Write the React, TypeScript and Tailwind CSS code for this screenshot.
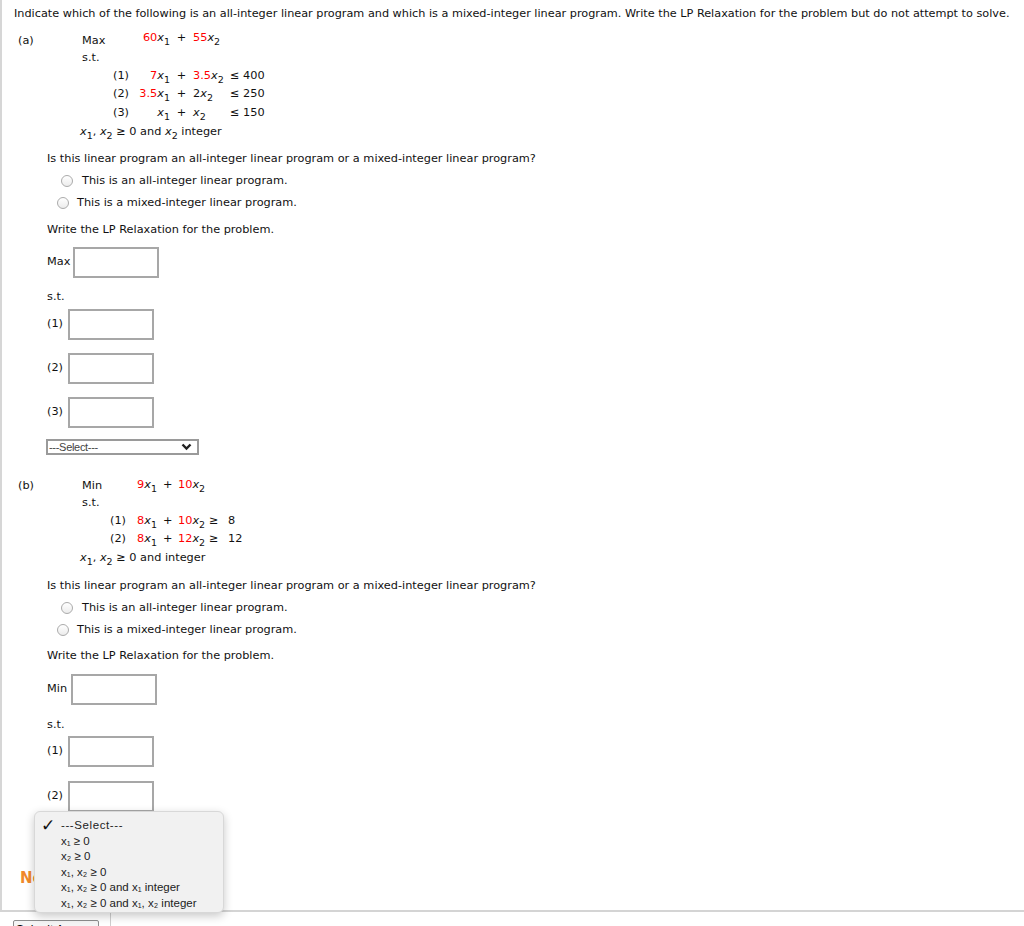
import type { ReactNode } from 'react';

// x with a subscript, as the textbook renders it
function V({ n }: { n: string }) {
  return (
    <span className="whitespace-nowrap">
      <i>x</i>
      <span className="relative top-[4px] text-[9.5px] leading-none">{n}</span>
    </span>
  );
}

function Red({ children }: { children: ReactNode }) {
  return <span className="text-[#ff0000]">{children}</span>;
}

function Box() {
  return <div className="h-[31px] w-[86px] border-2 border-[#a7a7a7] bg-white" />;
}

function Radio({ label, shift }: { label: string; shift?: boolean }) {
  return (
    <div className={`flex h-[22px] items-center ${shift ? 'pl-[55px]' : 'pl-[59px]'}`}>
      <span className="h-[12px] w-[12px] rounded-full border border-[#ababab] bg-linear-to-b from-white to-[#ececec]" />
      <span className={shift ? 'ml-[8px]' : 'ml-[9px]'}>{label}</span>
    </div>
  );
}

function Field({ label, gap, mt }: { label: string; gap: string; mt: string }) {
  return (
    <div className={`flex items-center pl-[45px] ${mt}`}>
      <span className={gap}>{label}</span>
      <Box />
    </div>
  );
}

const options = [
  'x₁ ≥ 0',
  'x₂ ≥ 0',
  'x₁, x₂ ≥ 0',
  'x₁, x₂ ≥ 0 and x₁ integer',
  'x₁, x₂ ≥ 0 and x₁, x₂ integer',
];

export default function App() {
  return (
    <div className="relative h-[926px] w-full overflow-hidden bg-white font-['DejaVu_Sans','Verdana',sans-serif] text-[11.3px] text-[#111]">
      <div className="h-[910px] border-l-2 border-[#d6d6d6]">
        {/* Question */}
        <p className="pl-[12px] pt-[6px] text-[11.25px] leading-[15px] whitespace-nowrap">
          Indicate which of the following is an all-integer linear program and which is a
          mixed-integer linear program. Write the LP Relaxation for the problem but do not
          attempt to solve.
        </p>

        {/* (a) */}
        <div className="mt-[11px] flex pl-[16px]">
          <div className="flex h-[18px] w-[64px] items-center">(a)</div>
          <div>
            <div className="flex h-[18px] items-center">
              <span className="w-[31px]">Max</span>
              <span className="flex w-[57px] -translate-y-[3px] justify-end">
                <Red>60</Red>
                <V n="1" />
              </span>
              <span className="w-[23px] -translate-y-[3px] text-center">+</span>
              <span className="-translate-y-[3px]">
                <Red>55</Red>
                <V n="2" />
              </span>
            </div>
            <div className="flex h-[17px] items-center">s.t.</div>
            <div className="flex h-[18px] items-center">
              <span className="w-[31px]" />
              <span className="w-[27px]">(1)</span>
              <span className="flex w-[30px] justify-end">
                <Red>7</Red>
                <V n="1" />
              </span>
              <span className="w-[23px] text-center">+</span>
              <span className="w-[37px]">
                <Red>3.5</Red>
                <V n="2" />
              </span>
              <span>≤ 400</span>
            </div>
            <div className="flex h-[19px] items-center">
              <span className="w-[31px]" />
              <span className="w-[27px]">(2)</span>
              <span className="flex w-[30px] justify-end">
                <Red>3.5</Red>
                <V n="1" />
              </span>
              <span className="w-[23px] text-center">+</span>
              <span className="w-[37px]">
                2<V n="2" />
              </span>
              <span>≤ 250</span>
            </div>
            <div className="flex h-[19px] items-center">
              <span className="w-[31px]" />
              <span className="w-[27px]">(3)</span>
              <span className="flex w-[30px] justify-end">
                <V n="1" />
              </span>
              <span className="w-[23px] text-center">+</span>
              <span className="w-[37px]">
                <V n="2" />
              </span>
              <span>≤ 150</span>
            </div>
            <div className="-ml-[2px] flex h-[18px] items-center whitespace-nowrap">
              <V n="1" />,&nbsp;<V n="2" />
              &nbsp;≥ 0 and&nbsp;<V n="2" />
              &nbsp;integer
            </div>
          </div>
        </div>

        <p className="mt-[7px] flex h-[22px] items-center pl-[45px]">
          Is this linear program an all-integer linear program or a mixed-integer linear program?
        </p>
        <Radio label="This is an all-integer linear program." />
        <Radio label="This is a mixed-integer linear program." shift />
        <p className="mt-[5px] flex h-[22px] items-center pl-[45px]">
          Write the LP Relaxation for the problem.
        </p>

        <Field label="Max" gap="w-[26px]" mt="mt-[6px]" />
        <p className="mt-[11px] flex h-[16px] items-center pl-[45px]">s.t.</p>
        <Field label="(1)" gap="w-[21px]" mt="mt-[4px]" />
        <Field label="(2)" gap="w-[21px]" mt="mt-[13px]" />
        <Field label="(3)" gap="w-[21px]" mt="mt-[13px]" />

        <div className="ml-[44px] mt-[11px] flex h-[16px] w-[153px] items-center justify-between border-2 border-[#9a9a9a] bg-white pl-[1px] pr-[5px] font-['Liberation_Sans',Arial,sans-serif] text-[11px] text-[#444]">
          <span className="tracking-[-0.3px]">---Select---</span>
          <svg width="11" height="8" viewBox="0 0 11 8">
            <path d="M1.5 1.5 L5.5 5.5 L9.5 1.5" fill="none" stroke="#222" strokeWidth="2.4" />
          </svg>
        </div>

        {/* (b) */}
        <div className="mt-[22px] flex pl-[16px]">
          <div className="flex h-[18px] w-[64px] items-center">(b)</div>
          <div>
            <div className="flex h-[18px] items-center">
              <span className="w-[55px]">Min</span>
              <span className="w-[26px] -translate-y-[1.5px]">
                <Red>9</Red>
                <V n="1" />
              </span>
              <span className="w-[15px] -translate-y-[1.5px]">+</span>
              <span className="-translate-y-[1.5px]">
                <Red>10</Red>
                <V n="2" />
              </span>
            </div>
            <div className="flex h-[17px] items-center">s.t.</div>
            <div className="flex h-[18px] items-center">
              <span className="w-[28px]" />
              <span className="w-[27px]">(1)</span>
              <span className="w-[26px]">
                <Red>8</Red>
                <V n="1" />
              </span>
              <span className="w-[15px]">+</span>
              <span className="w-[31px] whitespace-nowrap">
                <Red>10</Red>
                <V n="2" />
              </span>
              <span className="w-[19px]">≥</span>
              <span>8</span>
            </div>
            <div className="flex h-[19px] items-center">
              <span className="w-[28px]" />
              <span className="w-[27px]">(2)</span>
              <span className="w-[26px]">
                <Red>8</Red>
                <V n="1" />
              </span>
              <span className="w-[15px]">+</span>
              <span className="w-[31px] whitespace-nowrap">
                <Red>12</Red>
                <V n="2" />
              </span>
              <span className="w-[19px]">≥</span>
              <span>12</span>
            </div>
            <div className="-ml-[2px] flex h-[18px] items-center whitespace-nowrap">
              <V n="1" />,&nbsp;<V n="2" />
              &nbsp;≥ 0 and integer
            </div>
          </div>
        </div>

        <p className="mt-[8px] flex h-[22px] items-center pl-[45px]">
          Is this linear program an all-integer linear program or a mixed-integer linear program?
        </p>
        <Radio label="This is an all-integer linear program." />
        <Radio label="This is a mixed-integer linear program." shift />
        <p className="mt-[4px] flex h-[22px] items-center pl-[45px]">
          Write the LP Relaxation for the problem.
        </p>

        <Field label="Min" gap="w-[24px]" mt="mt-[7px]" />
        <p className="mt-[12px] flex h-[16px] items-center pl-[45px]">s.t.</p>
        <Field label="(1)" gap="w-[21px]" mt="mt-[3px]" />
        <Field label="(2)" gap="w-[21px]" mt="mt-[14px]" />

        <p className="mt-[58px] flex h-[16px] items-center pl-[18px] text-[15px] font-bold text-[#f0892a]">
          Next
        </p>
      </div>

      <div className="h-[2px] bg-[#d4d4d4]" />
      <div className="flex h-[20px]">
        <div className="w-[111px] border-r border-[#cfcfcf] pl-[13px] pt-[8px]">
          <button className="h-[20px] w-[86px] rounded-[2px] border border-[#8d8d8d] bg-[#f5f5f5] font-['Liberation_Sans',Arial,sans-serif] text-[12px] leading-[12px] text-black">
            Submit Answer
          </button>
        </div>
      </div>

      {/* open select menu */}
      <div className="absolute left-[34px] top-[811px] h-[102px] w-[190px] rounded-[6px] border border-[#d8d8d8] bg-[#f1f1f1] pt-[6px] font-['Liberation_Sans','DejaVu_Sans',Arial,sans-serif] text-[11.5px] text-[#222] shadow-[0_3px_10px_rgba(0,0,0,0.22)]">
        <div className="flex h-[15.5px] items-center">
          <span className="w-[26px] pl-[6px] font-['DejaVu_Sans',sans-serif] text-[17px] font-bold leading-none text-[#111]">
            ✓
          </span>
          <span className="tracking-[0.6px]">---Select---</span>
        </div>
        {options.map((o) => (
          <div key={o} className="flex h-[15.5px] items-center pl-[26px] whitespace-nowrap">
            {o}
          </div>
        ))}
      </div>
    </div>
  );
}
